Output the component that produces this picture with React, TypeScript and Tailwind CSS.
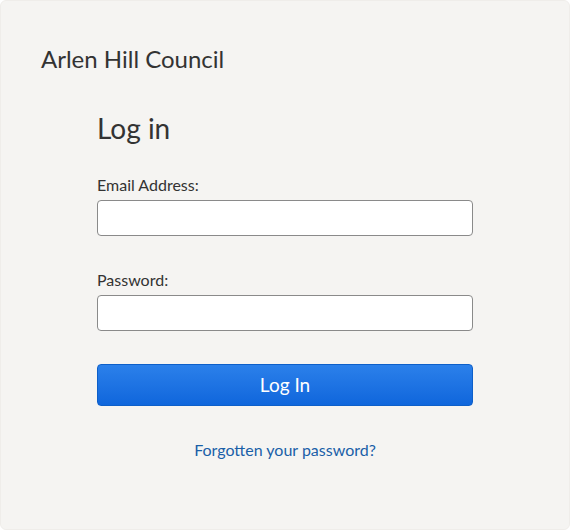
export default function App() {
  return (
    <div className="h-[530px] w-[570px] bg-white font-['Lato','Noto_Sans',sans-serif]">
      <div className="h-full w-full rounded-[6px] border border-[#efedea] bg-[#f5f4f2] pl-[40px] pt-[42px]">
        <h1 className="text-[24px] leading-[32px] text-[#333333]">Arlen Hill Council</h1>

        <div className="ml-[56px] mt-[36px] w-[376px]">
          <h2 className="text-[28px] leading-[34px] text-[#333333]">Log in</h2>

          <form className="mt-[30px]" onSubmit={(e) => e.preventDefault()}>
            <label className="block text-[16px] leading-[20px] text-[#333333]">Email Address:</label>
            <input
              type="email"
              className="mt-[5px] block h-[36px] w-full rounded-[4px] border border-[#8a8a8a] bg-white px-2"
            />

            <label className="mt-[34px] block text-[16px] leading-[20px] text-[#333333]">Password:</label>
            <input
              type="password"
              className="mt-[5px] block h-[36px] w-full rounded-[4px] border border-[#8a8a8a] bg-white px-2"
            />

            <button
              type="submit"
              className="mt-[33px] block h-[42px] w-full rounded-[4px] border border-[#0d5fc9] bg-gradient-to-b from-[#2b80ea] to-[#0f66dc] text-[19px] text-white"
            >
              Log In
            </button>
          </form>

          <div className="mt-[34px] text-center leading-[20px]">
            <a href="#" className="text-[16px] text-[#1a5fa8]">
              Forgotten your password?
            </a>
          </div>
        </div>
      </div>
    </div>
  );
}
